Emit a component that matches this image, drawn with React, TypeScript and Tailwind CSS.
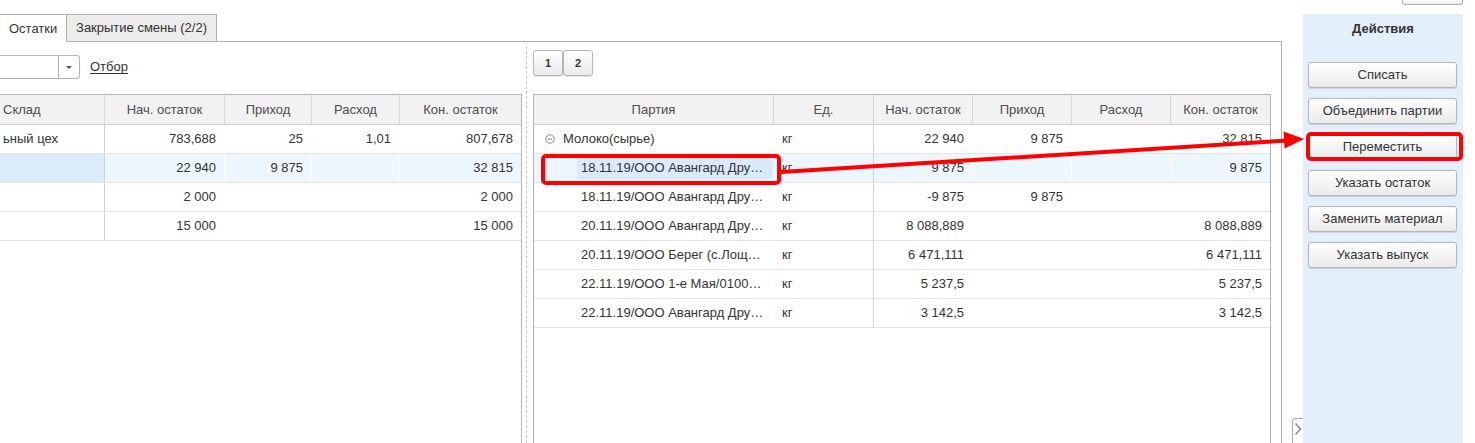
import React from "react";

const leftRows = [
  { name: "ьный цех", a: "783,688", b: "25", c: "1,01", d: "807,678" },
  { name: "", a: "22 940", b: "9 875", c: "", d: "32 815", sel: true },
  { name: "", a: "2 000", b: "", c: "", d: "2 000" },
  { name: "", a: "15 000", b: "", c: "", d: "15 000" },
];

const rightRows = [
  { p: "18.11.19/ООО Авангард Дру…", a: "9 875", b: "", c: "", d: "9 875", sel: true },
  { p: "18.11.19/ООО Авангард Дру…", a: "-9 875", b: "9 875", c: "", d: "" },
  { p: "20.11.19/ООО Авангард Дру…", a: "8 088,889", b: "", c: "", d: "8 088,889" },
  { p: "20.11.19/ООО Берег (с.Лощ…", a: "6 471,111", b: "", c: "", d: "6 471,111" },
  { p: "22.11.19/ООО 1-е Мая/0100…", a: "5 237,5", b: "", c: "", d: "5 237,5" },
  { p: "22.11.19/ООО Авангард Дру…", a: "3 142,5", b: "", c: "", d: "3 142,5" },
];

const btn =
  "flex items-center justify-center border border-[#b6b6b6] rounded-[3px] bg-linear-to-b from-white to-[#ebebeb] shadow-[0_1px_1px_rgba(0,0,0,0.12)] text-[#333]";

function HeadCell({ children, last }: { children?: React.ReactNode; last?: boolean }) {
  return (
    <div className={`flex items-center justify-center ${last ? "" : "border-r border-[#d8d8d8]"}`}>
      {children}
    </div>
  );
}

function Num({ v, sep = "white" }: { v: string; sep?: "white" | "none" }) {
  return (
    <div className={`flex items-center justify-end pr-[8px] ${sep === "white" ? "border-r border-white" : ""}`}>
      {v}
    </div>
  );
}

function LeftTable() {
  return (
    <div className="mt-[15px] flex-1 border-t border-r border-[#b4b4b4]">
      <div className="grid h-[30px] grid-cols-[105px_120px_87px_88px_121px] border-b border-[#cdcdcd] bg-[#f2f2f2] text-[#4d4d4d]">
        <div className="flex items-center border-r border-[#d8d8d8] pl-[3px]">Склад</div>
        <HeadCell>Нач. остаток</HeadCell>
        <HeadCell>Приход</HeadCell>
        <HeadCell>Расход</HeadCell>
        <HeadCell last>Кон. остаток</HeadCell>
      </div>
      {leftRows.map((r, i) => (
        <div
          key={i}
          className={`grid h-[29px] grid-cols-[105px_120px_87px_88px_121px] border-b border-[#e3e3e3] ${
            r.sel ? "bg-[#eef6fd]" : ""
          }`}
        >
          <div className={`flex items-center border-r border-[#d2d2d2] pl-[3px] ${r.sel ? "bg-[#dcebfb]" : ""}`}>
            {r.name}
          </div>
          <Num v={r.a} />
          <Num v={r.b} />
          <Num v={r.c} />
          <Num v={r.d} sep="none" />
        </div>
      ))}
    </div>
  );
}

function CircleMinus() {
  return (
    <svg width="10" height="10" viewBox="0 0 10 10" className="mr-[8px]">
      <circle cx="5" cy="5" r="4.2" fill="none" stroke="#8a8a8a" strokeWidth="1" />
      <line x1="2.8" y1="5" x2="7.2" y2="5" stroke="#777" strokeWidth="1" />
    </svg>
  );
}

function RightTable() {
  const cols = "grid-cols-[240px_100px_99px_99px_99px_99px]";
  return (
    <div className="mt-[18px] w-[738px] flex-1 border-t border-l border-r border-[#b4b4b4]">
      <div className={`grid h-[30px] ${cols} border-b border-[#cdcdcd] bg-[#f2f2f2] text-[#4d4d4d]`}>
        <HeadCell>Партия</HeadCell>
        <HeadCell>Ед.</HeadCell>
        <HeadCell>Нач. остаток</HeadCell>
        <HeadCell>Приход</HeadCell>
        <HeadCell>Расход</HeadCell>
        <HeadCell last>Кон. остаток</HeadCell>
      </div>
      <div className={`grid h-[29px] ${cols} border-b border-[#e3e3e3]`}>
        <div className="flex items-center pl-[11px]">
          <CircleMinus />
          Молоко(сырье)
        </div>
        <div className="flex items-center border-r border-[#d2d2d2] pl-[8px]">кг</div>
        <Num v="22 940" />
        <Num v="9 875" />
        <Num v="" />
        <Num v="32 815" sep="none" />
      </div>
      {rightRows.map((r, i) => (
        <div
          key={i}
          className={`grid h-[29px] ${cols} border-b border-[#e3e3e3] ${r.sel ? "bg-[#eef6fd]" : ""}`}
        >
          <div className="flex items-center pl-[43px]">
            {r.sel ? (
              <div className="flex h-[22px] w-[196px] items-center bg-[#dbeafb] pl-[4px]">{r.p}</div>
            ) : (
              <span className="pl-[4px]">{r.p}</span>
            )}
          </div>
          <div className="flex items-center border-r border-[#d2d2d2] pl-[8px]">кг</div>
          <Num v={r.a} />
          <Num v={r.b} />
          <Num v={r.c} />
          <Num v={r.d} sep="none" />
        </div>
      ))}
    </div>
  );
}

export default function App() {
  const actions = ["Списать", "Объединить партии", "Переместить", "Указать остаток", "Заменить материал", "Указать выпуск"];
  return (
    <div className="relative flex h-[443px] w-[1475px] overflow-hidden bg-white font-['Liberation_Sans',Arial,sans-serif] text-[13px] text-[#333]">
      <div className="flex w-[1282px] flex-col">
        <div className="flex h-[42px] items-end">
          <div className="flex h-[28px] w-[67px] items-center border-t border-r border-[#b0b0b0] bg-white pl-[9px]">
            Остатки
          </div>
          <div className="flex h-[28px] w-[150px] items-center justify-center border-t border-r border-b border-[#b0b0b0] bg-[#ececec]">
            Закрытие смены (2/2)
          </div>
          <div className="h-px flex-1 bg-[#b0b0b0]" />
        </div>
        <div className="flex flex-1 border-r border-[#b0b0b0]">
          <div className="flex w-[522px] flex-col">
            <div className="mt-[13px] flex h-[24px] items-center">
              <div className="flex h-[24px] w-[80px] justify-end rounded-r-[3px] border border-l-0 border-[#b4b4b4] bg-white">
                <div className="flex w-[21px] items-center justify-center border-l border-[#b4b4b4]">
                  <div className="h-0 w-0 border-x-[3px] border-t-[3px] border-x-transparent border-t-[#555]" />
                </div>
              </div>
              <span className="ml-[10px] text-[#333] underline underline-offset-2">Отбор</span>
            </div>
            <LeftTable />
          </div>
          <div className="w-[11px] pt-[4px]">
            <div className="ml-[4px] h-full w-0 border-l border-dashed border-[#c4c4c4]" />
          </div>
          <div className="flex flex-1 flex-col">
            <div className="mt-[8px] flex h-[26px]">
              <div className={`${btn} w-[30px] text-[11px] font-bold`}>1</div>
              <div className={`${btn} w-[30px] text-[11px] font-bold`}>2</div>
            </div>
            <RightTable />
          </div>
        </div>
      </div>
      <div className="flex w-[21px] flex-col justify-end">
        <div className="ml-[10px] flex h-[25px] w-[11px] items-start justify-center rounded-tl-[4px] border-t border-l border-[#aaaaaa] bg-white pt-[3px]">
          <svg width="8" height="14" viewBox="0 0 8 14">
            <path d="M1.5 1.5 L6.5 7 L1.5 12.5" fill="none" stroke="#8c8c8c" strokeWidth="1.6" />
          </svg>
        </div>
      </div>
      <div className="flex w-[160px] flex-col">
        <div className="h-[14px]">
          <div className="ml-[99px] h-[5px] w-[61px] rounded-b-[3px] border border-t-0 border-[#b0b0b0] bg-linear-to-b from-white to-[#ececec]" />
        </div>
        <div className="flex flex-1 flex-col bg-[#e3effb] pt-[7px]">
          <div className="h-[16px] text-center font-bold leading-[16px] text-[#333]">Действия</div>
          <div className="mt-[25px] flex flex-col gap-[10px] pl-[5px]">
            {actions.map((a) => (
              <div key={a} className={`${btn} h-[26px] w-[149px]`}>
                {a}
              </div>
            ))}
          </div>
        </div>
      </div>
      <div className="w-[12px]" />

      <svg className="pointer-events-none absolute inset-0" width="1475" height="443" viewBox="0 0 1475 443">
        <rect x="543" y="156" width="236" height="27" rx="3" fill="none" stroke="#ff0000" strokeWidth="4" />
        <rect x="1308" y="134" width="153" height="25" rx="3" fill="none" stroke="#ff0000" strokeWidth="4" />
        <line x1="781" y1="172" x2="1288" y2="140.5" stroke="#ff0000" strokeWidth="4" />
        <polygon points="1304,139 1284.5,148.5 1283.5,131.5" fill="#ff0000" />
      </svg>
    </div>
  );
}
